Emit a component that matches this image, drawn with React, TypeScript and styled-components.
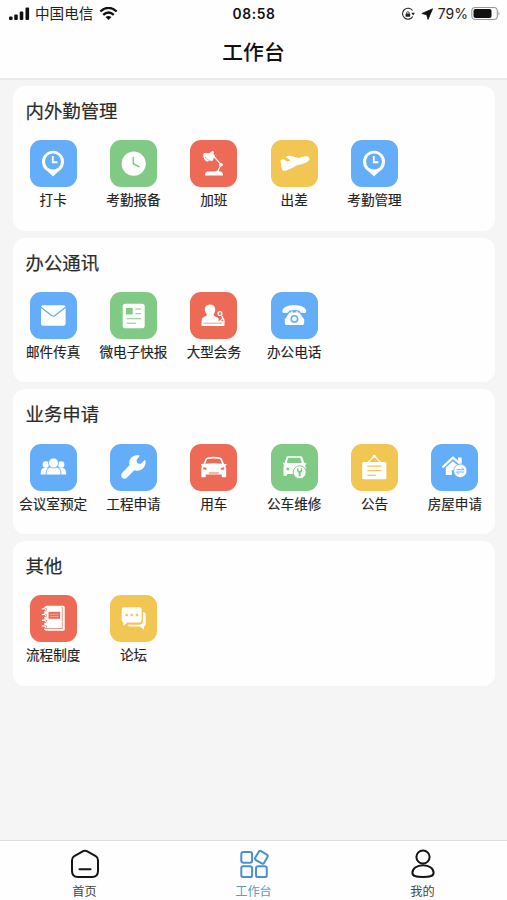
import React from "react";
import styled, { createGlobalStyle } from "styled-components";

const BLUE = "#64adf9";
const GREEN = "#81ca86";
const RED = "#ed6a57";
const YELLOW = "#f1c653";

const GlobalStyle = createGlobalStyle`
  * { box-sizing: border-box; }
  body { margin: 0; background: #f5f5f5; font-family: "Liberation Sans", "Noto Sans CJK SC", sans-serif; }
`;

const Screen = styled.div`
  display: flex;
  flex-direction: column;
  height: 900px;
  width: 100%;
  overflow: hidden;
  background: #f5f5f5;
`;

const StatusBar = styled.div`
  display: grid;
  grid-template-columns: 1fr auto 1fr;
  align-items: center;
  height: 27px;
  padding: 0 7px 0 8px;
  background: #fefefe;
  color: #111;
  flex: none;
`;

const StatusGroup = styled.div<{ $end?: boolean }>`
  display: flex;
  align-items: center;
  justify-content: ${(p) => (p.$end ? "flex-end" : "flex-start")};
  svg { display: block; flex: none; }
`;

const Carrier = styled.span`
  font: 14.6px/20px "Noto Sans CJK SC", sans-serif;
  margin: -1px 6px 0 5px;
  color: #222;
`;

const Clock = styled.span`
  font: 600 13.8px/20px Inter, sans-serif;
  letter-spacing: 0.6px;
`;

const Percent = styled.span`
  font: 14px/20px Inter, sans-serif;
  margin: 0 3px 0 4px;
  color: #222;
`;

const TitleBar = styled.header`
  height: 53px;
  flex: none;
  display: flex;
  align-items: center;
  justify-content: center;
  padding-bottom: 3px;
  background: #fefefe;
  border-bottom: 2px solid #e8e8e8;
  font: 500 20.8px/30px "Noto Sans CJK SC", sans-serif;
  color: #111;
`;

const Content = styled.main`
  flex: 1;
  min-height: 0;
  display: flex;
  flex-direction: column;
  gap: 7.2px;
  padding: 6px 12px 0 13px;
`;

const Card = styled.section`
  height: 144.5px;
  flex: none;
  background: #fefefe;
  border-radius: 12px;
`;

const CardTitle = styled.h2`
  margin: 0;
  padding: 10px 0 0 12.5px;
  height: 54.4px;
  font: 400 18.4px/28px "Noto Sans CJK SC", sans-serif;
  -webkit-text-stroke: 0.2px #2b2b2b;
  color: #2b2b2b;
`;

const Grid = styled.div`
  display: grid;
  grid-template-columns: repeat(6, 1fr);
`;

const Item = styled.div`
  display: flex;
  flex-direction: column;
  align-items: center;
`;

const Tile = styled.div<{ $color: string }>`
  width: 47px;
  height: 47px;
  border-radius: 11px;
  background: ${(p) => p.$color};
  svg { display: block; }
`;

const Label = styled.span`
  margin-top: 2px;
  font: 13.6px/20px "Noto Sans CJK SC", sans-serif;
  -webkit-text-stroke: 0.15px #222;
  color: #222;
  white-space: nowrap;
`;

const TabBar = styled.nav`
  height: 60px;
  flex: none;
  display: grid;
  grid-template-columns: repeat(3, 1fr);
  background: #fefefe;
  border-top: 1px solid #dcdcdc;
`;

const Tab = styled.div<{ $active?: boolean }>`
  display: flex;
  flex-direction: column;
  align-items: center;
  padding-top: 6.5px;
  color: ${(p) => (p.$active ? "#4a90d2" : "#151515")};
  svg { display: block; }
`;

const TabLabel = styled.span<{ $active?: boolean }>`
  margin-top: 2.5px;
  font: 12.2px/18px "Noto Sans CJK SC", sans-serif;
  color: ${(p) => (p.$active ? "#5a9ac6" : "#444")};
`;

const Pin = () => (
  <>
    <path d="M23 36.5c-1.500-1.800-3.500-3.600-6-5.600A11 11 0 1 1 29 30.900c-2.500 2-4.500 3.800-6 5.600z" fill="#fff" />
    <circle cx="23" cy="21.500" r="8" fill={BLUE} />
    <path d="M22.800 16v6.200h4.700" fill="none" stroke="#fff" strokeWidth="1.900" />
  </>
);

const ClockFace = () => (
  <>
    <circle cx="23.700" cy="23.700" r="12.100" fill="#fff" />
    <path d="M23.300 17v6.700l6.200 3.300" fill="none" stroke={GREEN} strokeWidth="1.500" />
  </>
);

const Lamp = () => (
  <>
    <path d="M13.300 14.500q0-1.500 1.500-1.500l4.200.2 3.500-2.200q1.500-.2 1.500 1.500l-.5 1.500 1.700 2-3.200 5.500q-1.500-2-3.500-.2l-1 .5q-4.500-1.500-4.200-7.300z" fill="#fff" />
    <path d="M24 16.500l7 8-3.500 7.500" fill="none" stroke="#fff" strokeWidth="1.200" />
    <circle cx="31" cy="24.800" r="1.800" fill="#fff" />
    <path d="M15 35.500q0-4 3-4h6.500q2.500-1.500 5 0h1q2.500.3 2.500 4z" fill="#fff" />
    <path d="M15 17l4.500 4" stroke={RED} strokeWidth=".6" />
  </>
);

const Plane = () => (
  <path d="M9.500 20.300l2.600-1.200 4.200 2.400 3.300-1-5-3.400 3.300-1.600 9.800 2.600 6.300-1.800q4-.6 4.600 2 .2 2-3.300 4.300-3.300 1.500-9.300 2.700-5.500 3.500-10.500 5.200-3 .7-4.200-.5-1.600-4.700-1.800-9.700z" fill="#fff" />
);

const Mail = () => (
  <>
    <rect x="11" y="13.300" width="24.600" height="20.400" rx="2.200" fill="#fff" />
    <path d="M11 15.300l10.500 8.200q1.800 1.200 3.600 0l10.500-8.200" fill="none" stroke={BLUE} strokeWidth="1.300" />
  </>
);

const News = () => (
  <>
    <rect x="12.700" y="11.700" width="22" height="24.500" rx="2.800" fill="#fff" />
    <rect x="16" y="16" width="6.700" height="6.500" fill={GREEN} />
    <path d="M25.300 17h5.700M25.300 21.800h5.700M16.500 26.800h14.700M16.500 31.300h9.500" stroke={GREEN} strokeWidth="1.100" />
  </>
);

const Speaker = () => (
  <>
    <path d="M20 12.500c4.200 0 5.600 3 5.200 6.200-.3 2-1.600 3-1.600 4.400 0 1.300 2.800 1.900 5 3.200v3.300H11.800v-2c0-3 5-3.300 5-4.700 0-1.200-1.600-2.200-1.900-4.300-.4-3.300 1.200-6.100 5.100-6.100z" fill="#fff" />
    <rect x="11.500" y="29" width="23" height="5" rx="1" fill="#fff" />
    <path d="M13.500 31.200h18.500" stroke={RED} strokeWidth=".7" />
    <circle cx="30" cy="21.500" r="1.900" fill="none" stroke="#fff" strokeWidth="1.300" />
    <path d="M31.300 23.500c2.500 2 1.200 4-1.800 5.700M32 25q2.300 2 2 5" fill="none" stroke="#fff" strokeWidth="1.300" />
  </>
);

const Telephone = () => (
  <>
    <path d="M11.300 19c.5-3.800 5.500-5.800 12-5.800s11.500 2 12 5.800q.2 2-1.800 2l-3.500-.2q-1.200-.3-1.300-2-5.400-1.500-10.800 0-.1 1.700-1.300 2l-3.500.2q-2 0-1.800-2z" fill="#fff" />
    <path d="M18.500 20.500h1.700v-1.300h1.300v1.300h3.700v-1.300h1.300v1.300h1.700l5 7v3.700q0 1.800-1.800 1.800H15.600q-1.800 0-1.800-1.800v-3.700z" fill="#fff" />
    <circle cx="23.400" cy="27" r="3.200" fill="none" stroke={BLUE} strokeWidth="1.600" />
  </>
);

const People = () => (
  <>
    <circle cx="15.800" cy="20.500" r="3.200" fill="#fff" />
    <circle cx="31.200" cy="20.500" r="3.200" fill="#fff" />
    <path d="M10.700 30.400c0-4.300 1.200-6.400 4-6.700h3v6.700zM36.200 30.400c0-4.300-1.200-6.400-4-6.700h-3v6.700z" fill="#fff" />
    <path d="M16 31c0-5 1.800-7.500 4.400-8h6.200c2.600.5 4.400 3 4.400 8z" fill="#fff" stroke={BLUE} strokeWidth=".9" />
    <circle cx="23.500" cy="19" r="5" fill="#fff" stroke={BLUE} strokeWidth=".8" />
  </>
);

const Wrench = () => (
  <path
    d="M29.800 11.800c-4-1.500-9 .7-10.300 5-.4 1.500-.3 2.800.1 4.200l-7.300 7.700c-1.500 1.700-1.500 3.700-.2 5 1.500 1.500 3.600 1.300 5-.2l7.200-7.200c3.800 1 7.800-.2 9.900-3.400 1.400-2.200 1.800-4.800.9-7.200l-4.600 4.300-3.200-.8-.8-3.100z"
    fill="#fff"
  />
);

const Car = () => (
  <>
    <path d="M17.300 13.600q6.500-1.500 12.700 0 1.600.3 2.200 2l2 4.600 2.300-.4q.5 1.700-1.300 2.200 1 1 1 3v7.300q0 1-1 1h-2.500q-1 0-1-1v-1.800H15.800v1.800q0 1-1 1h-2.500q-1 0-1-1V25q0-2 1-3-1.800-.5-1.300-2.200l2.300.4 1.900-4.600q.6-1.700 2.100-2z" fill="#fff" />
    <path d="M17.800 15q6-1.200 11.700 0 .7.200 1 1l1.500 3.700q-8.400-1-16.700 0l1.500-3.700q.3-.8 1-1z" fill={RED} />
    <path d="M13.300 23l3.500 1.300-.5 1.500-3-.4zM34.200 23l-3.500 1.300.5 1.500 3-.4zM18.500 28.400h10.500l-.7 1h-9z" fill={RED} />
  </>
);

const CarRepair = () => (
  <>
    <path d="M17 12.200h12.500q1.400 0 1.900 1.400l1.900 5.500 1.800-.3q.7 1.700-1 2.100l.6 2V31h-3.200v-1H16v1.800h-3.500V22.900l.7-2q-1.900-.5-1.200-2.300l1.600.5 1.700-5.500q.4-1.400 1.700-1.400z" fill="#fff" />
    <path d="M17.300 13.700h11.900l1.600 5.300H15.700z" fill={GREEN} />
    <circle cx="16.800" cy="25" r="1.400" fill={GREEN} />
    <circle cx="28.700" cy="28.300" r="6.500" fill="#fff" stroke={GREEN} strokeWidth="1" />
    <path d="M26 26q0-1.800 1.500-2.200v2.400l1.200.8 1.200-.8v-2.400q1.500.4 1.500 2.200 0 2-1.700 2.900v3.300h-2v-3.300Q26 28 26 26z" fill={GREEN} />
  </>
);

const Notice = () => (
  <>
    <path d="M16.800 18.500l6.500-6.500 6.500 6.500" fill="none" stroke="#fff" strokeWidth="1.100" />
    <circle cx="23.300" cy="12.300" r="1.500" fill="#fff" />
    <rect x="11.200" y="18" width="24.200" height="17.200" rx="1.500" fill="#fff" />
    <path d="M16.300 22.200h14M16.300 26.700h14M16.300 31.300h8.500" stroke={YELLOW} strokeWidth="1.300" />
  </>
);

const House = () => (
  <>
    <path d="M12.200 22.800L21.900 13.600 31.800 22" fill="none" stroke="#fff" strokeWidth="2.200" strokeLinecap="round" strokeLinejoin="round" />
    <path d="M27 13.500h3.700v6L27 16.500zM14.800 23.400l7.100-6.200 7.300 6V31h-5v-4.800h-3.400V31h-6z" fill="#fff" />
    <circle cx="29.300" cy="26.800" r="6.700" fill="#fff" stroke={BLUE} strokeWidth=".8" />
    <path d="M25.500 25.700h7.600l-2.300-2M33.100 28h-7.600l2.300 2" fill="none" stroke={BLUE} strokeWidth=".9" />
  </>
);

const Book = () => (
  <>
    <path d="M17 10.700h16.200q1.500 0 1.500 1.500v22q0 1.500-1.500 1.500H15.500l-1.200-1.500V12.200q.7-1.500 2.700-1.500z" fill="#fff" />
    <path d="M15.500 33.500h16.800V12" fill="none" stroke={RED} strokeWidth=".7" />
    <rect x="18.500" y="16.800" width="11.600" height="7" fill={RED} />
    <path d="M20 19.300h8.500M20 21.500h8.500" stroke="#f5aea4" strokeWidth=".8" />
    {[14.7, 20.4, 26.2, 31.9].map((y) => (
      <g key={y}>
        <circle cx="15.300" cy={y} r="1.700" fill={RED} />
        <path d={`M12.400 ${y - 0.8}q2.600-.8 3.600 1.300`} fill="none" stroke="#fff" strokeWidth="1.300" strokeLinecap="round" />
      </g>
    ))}
  </>
);

const Forum = () => (
  <>
    <path d="M33 17q2.700.2 2.700 2.700v9q0 2.500-1.700 2.700v3.200l-4.300-3.100H20q-2 0-2.400-1.800H29q4 0 4-4z" fill="#fff" />
    <path d="M14 12.300h15.400q2.300 0 2.300 2.300V25q0 2.500-2.300 2.500H17.200L13.500 31v-3.600q-1.800-.2-1.800-2.400V14.600q0-2.300 2.300-2.300z" fill="#fff" />
    <g fill={YELLOW}>
      <circle cx="16.700" cy="20" r="1.300" />
      <circle cx="21.800" cy="20" r="1.300" />
      <circle cx="27" cy="20" r="1.300" />
    </g>
  </>
);

type Entry = { label: string; color: string; icon: React.FC };

const sections: { title: string; items: Entry[] }[] = [
  {
    title: "内外勤管理",
    items: [
      { label: "打卡", color: BLUE, icon: Pin },
      { label: "考勤报备", color: GREEN, icon: ClockFace },
      { label: "加班", color: RED, icon: Lamp },
      { label: "出差", color: YELLOW, icon: Plane },
      { label: "考勤管理", color: BLUE, icon: Pin },
    ],
  },
  {
    title: "办公通讯",
    items: [
      { label: "邮件传真", color: BLUE, icon: Mail },
      { label: "微电子快报", color: GREEN, icon: News },
      { label: "大型会务", color: RED, icon: Speaker },
      { label: "办公电话", color: BLUE, icon: Telephone },
    ],
  },
  {
    title: "业务申请",
    items: [
      { label: "会议室预定", color: BLUE, icon: People },
      { label: "工程申请", color: BLUE, icon: Wrench },
      { label: "用车", color: RED, icon: Car },
      { label: "公车维修", color: GREEN, icon: CarRepair },
      { label: "公告", color: YELLOW, icon: Notice },
      { label: "房屋申请", color: BLUE, icon: House },
    ],
  },
  {
    title: "其他",
    items: [
      { label: "流程制度", color: RED, icon: Book },
      { label: "论坛", color: YELLOW, icon: Forum },
    ],
  },
];

const HomeIcon = () => (
  <svg width="32" height="32" viewBox="0 0 32 32" fill="none" stroke="currentColor" strokeWidth="2">
    <path d="M14.200 3.200q1.800-.9 3.600 0l8.900 5q2.300 1.300 2.300 4V23q0 6-6 6H9q-6 0-6-6V12.200q0-2.700 2.300-4z" />
    <path d="M10.500 21.300h11" strokeLinecap="round" />
  </svg>
);

const AppsIcon = () => (
  <svg width="32" height="32" viewBox="0 0 32 32" fill="none" stroke="currentColor" strokeWidth="2">
    <rect x="3.300" y="4" width="10.800" height="10.800" rx="2.200" />
    <rect x="3.300" y="18.300" width="10.800" height="10.800" rx="2.200" />
    <rect x="18" y="18.300" width="10.800" height="10.800" rx="2.200" />
    <rect x="18.300" y="4.200" width="10.200" height="10.200" rx="1.800" transform="rotate(30 23.400 9.300)" />
  </svg>
);

const UserIcon = () => (
  <svg width="32" height="32" viewBox="0 0 32 32" fill="none" stroke="currentColor" strokeWidth="2">
    <circle cx="16" cy="9" r="6.600" />
    <path d="M16 17.200c6.500 0 10.600 3.700 10.600 7.500 0 3.500-3.500 4.300-10.600 4.300S5.400 28.200 5.400 24.700c0-3.800 4.100-7.500 10.600-7.500z" />
  </svg>
);

const tabs = [
  { label: "首页", icon: HomeIcon },
  { label: "工作台", icon: AppsIcon, active: true },
  { label: "我的", icon: UserIcon },
];

export default function App() {
  return (
    <Screen>
      <GlobalStyle />
      <StatusBar>
        <StatusGroup>
          <svg width="22" height="14" viewBox="0 0 22 14" fill="#111">
            <rect x="1" y="9.500" width="3.600" height="3.500" rx="1" />
            <rect x="6.200" y="7.500" width="3.600" height="5.500" rx="1" />
            <rect x="11.700" y="4.500" width="3.600" height="8.500" rx="1" />
            <rect x="17.500" y="0.500" width="3.600" height="12.500" rx="1" />
          </svg>
          <Carrier>中国电信</Carrier>
          <svg width="19" height="14" viewBox="0 0 19 14" fill="none" stroke="#111" strokeWidth="2.300">
            <path d="M1.300 4.500q8.200-7.200 16.400 0M4.200 7.900q5.300-4.800 10.600 0" />
            <path d="M6.500 10.100q3-2.400 6 0l-3 3z" fill="#111" stroke="none" />
          </svg>
        </StatusGroup>
        <Clock>08:58</Clock>
        <StatusGroup $end>
          <svg width="14" height="14" viewBox="0 0 14 14" fill="none" stroke="#222">
            <path d="M11.500 3.500A5.500 5.500 0 1 0 11.800 9.500" strokeWidth="1.100" />
            <path d="M10.300 5.800h3.600l-1.700 2.600z" fill="#222" stroke="none" />
            <rect x="4.600" y="6.400" width="4.600" height="3.400" rx=".5" fill="#222" stroke="none" />
            <path d="M5.600 6.600V5.500q1.300-2 2.600 0v1.100" strokeWidth=".9" />
          </svg>
          <svg width="19" height="12" viewBox="0 0 19 12">
            <path d="M17.600.8L13 11.400 11.700 6.700 6.900 5.500z" fill="#111" stroke="#111" strokeWidth=".8" strokeLinejoin="round" />
          </svg>
          <Percent>79%</Percent>
          <svg width="29" height="14" viewBox="0 0 29 14">
            <rect x=".8" y="0.500" width="25.500" height="12" rx="3.500" fill="none" stroke="#999" strokeWidth="1.100" />
            <rect x="2.500" y="2.100" width="18" height="8.800" rx="2" fill="#111" />
            <path d="M27.500 4.500q2 2 0 4z" fill="#999" />
          </svg>
        </StatusGroup>
      </StatusBar>
      <TitleBar>工作台</TitleBar>
      <Content>
        {sections.map((section) => (
          <Card key={section.title}>
            <CardTitle>{section.title}</CardTitle>
            <Grid>
              {section.items.map(({ label, color, icon: Icon }) => (
                <Item key={label}>
                  <Tile $color={color}>
                    <svg width="47" height="47" viewBox="0 0 47 47">
                      <Icon />
                    </svg>
                  </Tile>
                  <Label>{label}</Label>
                </Item>
              ))}
            </Grid>
          </Card>
        ))}
      </Content>
      <TabBar>
        {tabs.map(({ label, icon: Icon, active }) => (
          <Tab key={label} $active={active}>
            <Icon />
            <TabLabel $active={active}>{label}</TabLabel>
          </Tab>
        ))}
      </TabBar>
    </Screen>
  );
}
